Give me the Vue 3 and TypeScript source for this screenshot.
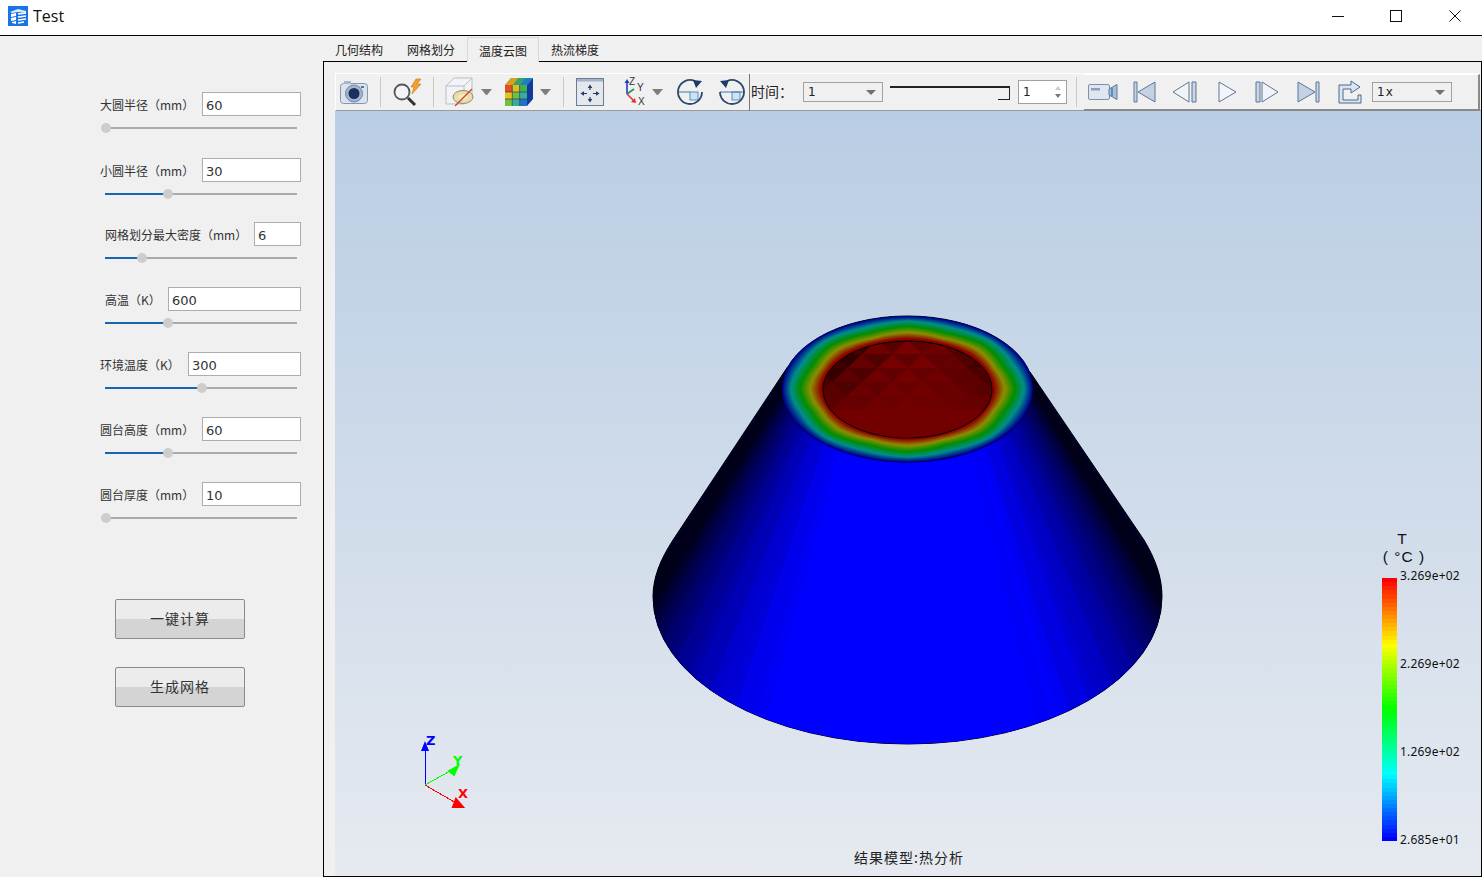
<script setup lang="ts">
import { computed } from "vue";

const params = [
  { label: "大圆半径（mm）", value: "60", inputWidth: 99, indent: false, pos: 1 },
  { label: "小圆半径（mm）", value: "30", inputWidth: 99, indent: false, pos: 63 },
  { label: "网格划分最大密度（mm）", value: "6", inputWidth: 47, indent: true, pos: 37 },
  { label: "高温（K）", value: "600", inputWidth: 133, indent: true, pos: 63 },
  { label: "环境温度（K）", value: "300", inputWidth: 113, indent: false, pos: 97 },
  { label: "圆台高度（mm）", value: "60", inputWidth: 99, indent: false, pos: 63 },
  { label: "圆台厚度（mm）", value: "10", inputWidth: 99, indent: false, pos: 1 },
];

const tabs = ["几何结构", "网格划分", "温度云图", "热流梯度"];

// rainbow map, t = 0 blue ... 1 red
function rainbow(t: number, scale = 255): string {
  const stops = [
    [0, 0, 1],
    [0, 1, 1],
    [0, 1, 0],
    [1, 1, 0],
    [1, 0, 0],
  ];
  const p = Math.min(0.9999, Math.max(0, t)) * 4;
  const i = Math.floor(p);
  const f = p - i;
  const c = stops[i].map((v, k) => Math.round((v + (stops[i + 1][k] - v) * f) * scale));
  return `rgb(${c[0]},${c[1]},${c[2]})`;
}

const legendBands = computed(() => {
  const n = 64;
  const out: string[] = [];
  for (let i = 0; i < n; i++) out.push(rainbow(1 - i / (n - 1)));
  return out;
});

const CX = 907.5;
const TOP_Y = 389;
const BASE_Y = 597;
const CONE_PATH =
  "M787.5 367 L673 540 C660 560 653 578 653 597 A254.5 147 0 0 0 1162 597 C1162 578 1156 560 1144 540 L1030 372 Z";

// side of the cone, one wedge per facet
const wedges = computed(() => {
  const n = 72;
  const out: { points: string; fill: string }[] = [];
  for (let i = 0; i < n; i++) {
    const a0 = -0.2 + ((Math.PI + 0.4) * i) / n;
    const a1 = -0.2 + ((Math.PI + 0.4) * (i + 1)) / n;
    const p = (r: number, ry: number, y: number, a: number) =>
      `${(CX + r * Math.cos(a)).toFixed(1)},${(y + ry * Math.sin(a)).toFixed(1)}`;
    const mid = (a0 + a1) / 2;
    const noise = 1 + 0.03 * Math.sin(i * 2.3);
    const b = Math.min(1, Math.max(0.1, Math.sin(mid) * 1.12 * noise + 0.06));
    out.push({
      points: [p(125, 73, TOP_Y, a0), p(125, 73, TOP_Y, a1), p(255, 147, BASE_Y, a1), p(255, 147, BASE_Y, a0)].join(" "),
      fill: `rgb(0,0,${Math.round(b * 255)})`,
    });
  }
  return out;
});

// top ring bands, slightly polygonal like the coarse mesh
const ringBands = computed(() => {
  const n = 44;
  const out: { points: string; fill: string }[] = [];
  for (let j = 0; j < n; j++) {
    const t = j / (n - 1);
    const pts: string[] = [];
    for (let k = 0; k < 96; k++) {
      const a = (k / 96) * Math.PI * 2;
      const saw = Math.abs(((a / (Math.PI / 4)) % 1) - 0.5) * 2;
      const bump = 0.034 * Math.sin(Math.PI * t) * (saw - 0.5);
      const r = 1 - 0.33 * t + bump;
      pts.push(`${(CX + 125.5 * r * Math.cos(a)).toFixed(1)},${(TOP_Y + 73 * r * Math.sin(a)).toFixed(1)}`);
    }
    out.push({ points: pts.join(" "), fill: rainbow(Math.min(1, t * 1.06), 142) });
  }
  return out;
});

// facets on the inside of the hole
const holeFacets = computed(() => {
  const out: { points: string; fill: string }[] = [];
  const dx = 30;
  const dy = 14;
  for (let row = 0; row < 5; row++) {
    const y = 340 + row * dy;
    for (let col = -4; col <= 4; col++) {
      const x = CX + col * dx + (row % 2 ? dx / 2 : 0);
      const edge = Math.min(1, Math.abs(x - CX) / 84);
      const up = Math.max(0, 1 - row / 4);
      const base = 112 - 60 * edge * edge * (0.3 + up);
      out.push({
        points: `${x},${y} ${x + dx / 2},${y + dy} ${x - dx / 2},${y + dy}`,
        fill: `rgb(${Math.round(base + 8 * (1 - row / 5))},0,0)`,
      });
      out.push({
        points: `${x},${y} ${x + dx},${y} ${x + dx / 2},${y + dy}`,
        fill: `rgb(${Math.round(base - 16 * (1 - row / 5))},0,0)`,
      });
    }
  }
  return out;
});
</script>

<template>
  <div class="app">
    <header class="titlebar">
      <svg class="app-icon" width="20" height="20" viewBox="0 0 20 20">
        <rect width="20" height="20" fill="#1a74e2" />
        <path d="M2 6 L10 3 L18 5 L18 7 L10 6 L4 7 Z" fill="#dbeafc" />
        <path d="M3 8 L8 7 L8 10 L3 11 Z M3 12 L8 11 L8 14 L3 15 Z M4 16 L8 15 L8 18 L4 17 Z" fill="#fff" />
        <path d="M10 8 L18 7 M10 11 L18 10 M10 14 L18 13 M10 17 L16 16" stroke="#fff" stroke-width="1.6" />
      </svg>
      <span class="app-title">Test</span>
      <div class="win-btns">
        <span class="win-btn"><svg width="14" height="14" viewBox="0 0 14 14"><path d="M1 7.5 H13" stroke="#111" /></svg></span>
        <span class="win-btn"><svg width="14" height="14" viewBox="0 0 14 14"><rect x="1.5" y="1.5" width="11" height="11" fill="none" stroke="#111" /></svg></span>
        <span class="win-btn"><svg width="14" height="14" viewBox="0 0 14 14"><path d="M1.5 1.5 L12.5 12.5 M12.5 1.5 L1.5 12.5" stroke="#111" /></svg></span>
      </div>
    </header>

    <div class="main">
      <aside class="side">
        <div v-for="p in params" :key="p.label" class="param">
          <div class="param-row" :class="{ indent: p.indent }">
            <label class="param-label">{{ p.label }}</label>
            <input class="param-input" :style="{ width: p.inputWidth + 'px' }" :value="p.value" readonly />
          </div>
          <div class="slider">
            <div class="slider-track"></div>
            <div class="slider-fill" :style="{ width: p.pos + 'px' }"></div>
            <div class="slider-handle" :style="{ left: p.pos + 'px' }"></div>
          </div>
        </div>
        <div class="actions">
          <button class="action-btn">一键计算</button>
          <button class="action-btn">生成网格</button>
        </div>
      </aside>

      <section class="content">
        <nav class="tabs">
          <span v-for="(t, i) in tabs" :key="t" class="tab" :class="{ active: i === 2 }">{{ t }}</span>
        </nav>

        <div class="frame">
          <div class="toolbar">
            <!-- camera -->
            <svg class="ml4" width="28" height="24" viewBox="0 0 28 24">
              <rect x="0.5" y="3.5" width="27" height="20" rx="3" fill="#dbe3ee" stroke="#8297b2" />
              <rect x="4" y="1" width="7" height="3" fill="#a9b8cb" />
              <rect x="21" y="6" width="3" height="2" fill="#5f7693" />
              <circle cx="14" cy="13.5" r="8.5" fill="#a3b5cb" stroke="#6f86a3" />
              <circle cx="14" cy="13.5" r="5.5" fill="#1c2f63" />
            </svg>
            <i class="sep ml12"></i>
            <!-- search with lightning -->
            <svg class="ml11" width="30" height="30" viewBox="0 0 30 30">
              <circle cx="10" cy="15" r="7.5" fill="#f2f4f7" stroke="#555" stroke-width="1.8" />
              <path d="M16 21 L23 28" stroke="#333" stroke-width="3" />
              <path d="M24 2 L29 2 L25 7 L29 7 L20 17 L22 10 L19 10 Z" fill="#f0a030" stroke="#c77a10" stroke-width="0.6" />
            </svg>
            <i class="sep ml11"></i>
            <!-- clipping box -->
            <svg class="ml11" width="30" height="30" viewBox="0 0 30 30">
              <path d="M1 9 L9 1 L27 1 L27 19 L19 27 L1 27 Z" fill="#f2f3f6" stroke="#b7bdc9" />
              <path d="M1 9 L19 9 L27 1 M19 9 L19 27" fill="none" stroke="#b7bdc9" />
              <ellipse cx="18" cy="20" rx="10" ry="6.5" fill="#ecdca5" stroke="#8a8a7a" />
              <ellipse cx="18" cy="20" rx="5" ry="3" fill="#f4e9c2" />
              <path d="M10 29 L27 12" stroke="#c8452c" stroke-width="1.2" />
            </svg>
            <i class="drop ml6"></i>
            <!-- colour cube -->
            <svg class="ml13" width="28" height="28" viewBox="0 0 28 28">
              <path d="M6 0 L28 0 L22 7 L0 7 Z" fill="#3aa06a" />
              <path d="M6 0 L13 0 L8 7 L0 7 Z" fill="#d8a020" />
              <path d="M20 0 L28 0 L22 7 L15 7 Z" fill="#1e7fc0" />
              <path d="M22 7 L28 0 L28 21 L22 28 Z" fill="#123a9c" />
              <rect x="0" y="7" width="7.3" height="7" fill="#e05020" />
              <rect x="7.3" y="7" width="7.3" height="7" fill="#d8c020" />
              <rect x="14.6" y="7" width="7.4" height="7" fill="#40b050" />
              <rect x="0" y="14" width="7.3" height="7" fill="#e8c020" />
              <rect x="7.3" y="14" width="7.3" height="7" fill="#70c040" />
              <rect x="14.6" y="14" width="7.4" height="7" fill="#30b0a0" />
              <rect x="0" y="21" width="7.3" height="7" fill="#70c040" />
              <rect x="7.3" y="21" width="7.3" height="7" fill="#30b0a0" />
              <rect x="14.6" y="21" width="7.4" height="7" fill="#2070d0" />
              <path d="M0 14 H22 M0 21 H22 M7.3 7 V28 M14.6 7 V28" stroke="#3a3a3a" stroke-width="0.7" />
            </svg>
            <i class="drop ml7"></i>
            <i class="sep ml12"></i>
            <!-- fit view -->
            <svg class="ml12" width="28" height="28" viewBox="0 0 28 28">
              <rect x="0.5" y="0.5" width="27" height="27" fill="#e4e7ec" stroke="#6b7d95" />
              <rect x="1" y="1" width="26" height="2.5" fill="#9fb3cc" />
              <path d="M14 9 V12 M14 19 V22 M7 15.5 H11 M17 15.5 H21" stroke="#1f3a63" stroke-width="1.2" />
              <path d="M14 6.5 L11.7 10 H16.3 Z M14 24.5 L11.7 21 H16.3 Z M4.5 15.5 L8 13.2 V17.8 Z M23.5 15.5 L20 13.2 V17.8 Z" fill="#1f3a63" />
            </svg>
            <!-- axes -->
            <svg class="ml16" width="26" height="30" viewBox="0 0 26 30">
              <path d="M7 17 V5" stroke="#1c3fc0" stroke-width="1.6" />
              <path d="M7 2 L4.5 6 H9.5 Z" fill="#1c3fc0" />
              <path d="M7 17 L14 12" stroke="#1a9a50" stroke-width="1.6" />
              <path d="M7 17 L15 25" stroke="#e0303a" stroke-width="1.6" />
              <path d="M16 26 L11 25 L15 21 Z" fill="#e0303a" />
              <text x="9" y="8" class="axis-label">Z</text>
              <text x="17" y="14" class="axis-label">Y</text>
              <text x="18" y="28" class="axis-label">X</text>
            </svg>
            <i class="drop ml6"></i>
            <!-- rotate cw -->
            <svg class="ml13" width="28" height="28" viewBox="0 0 28 28">
              <rect x="14" y="14" width="8" height="8" fill="#cfe3f6" stroke="#3c78b0" stroke-width="0.8" />
              <path d="M2 14 H14" stroke="#3c78b0" />
              <path d="M19 3.1 A12 12 0 1 0 26 14" fill="none" stroke="#2c4a6e" stroke-width="1.8" />
              <path d="M17 2 L26 3 L20 10 Z" fill="#1f3a63" />
            </svg>
            <!-- rotate ccw -->
            <svg class="ml14" width="28" height="28" viewBox="0 0 28 28">
              <rect x="14" y="14" width="8" height="8" fill="#cfe3f6" stroke="#3c78b0" stroke-width="0.8" />
              <path d="M2 14 H26" stroke="#3c78b0" />
              <path d="M9 3.1 A12 12 0 1 1 2 14" fill="none" stroke="#2c4a6e" stroke-width="1.8" />
              <path d="M11 2 L2 3 L8 10 Z" fill="#1f3a63" />
            </svg>
            <i class="sep dark ml3"></i>
            <span class="time-label ml1">时间：</span>
            <div class="combo"><span>1</span><i class="combo-arrow"></i></div>
            <div class="time-slider ml7"><i class="time-handle"></i></div>
            <div class="spin ml8">
              <span>1</span>
              <span class="spin-arrows"><i class="spin-up"></i><i class="spin-down"></i></span>
            </div>
            <i class="sep ml9"></i>

            <div class="player ml7">
              <svg class="ml4" width="30" height="18" viewBox="0 0 30 18">
                <rect x="0.5" y="1.5" width="21" height="15" rx="1.5" fill="#dfe6f0" stroke="#7b90ab" />
                <rect x="3" y="5" width="9" height="2.5" fill="#8ca0ba" />
                <path d="M21 6 L29 1.5 V16.5 L21 12 Z" fill="#a9bdd4" stroke="#5f7a98" />
                <path d="M24 5 V13" stroke="#2e86c8" stroke-width="1.5" />
              </svg>
              <svg class="ml15" width="23" height="22" viewBox="0 0 23 22">
                <path d="M1 1 H4 V21 H1 Z" fill="#c9d5e6" stroke="#5d7695" />
                <path d="M22 1 V21 L5 11 Z" fill="#c4d1e3" stroke="#5d7695" />
              </svg>
              <svg class="ml16" width="25" height="22" viewBox="0 0 25 22">
                <path d="M17 1 V21 L1 11 Z" fill="#f0f3f8" stroke="#5d7695" />
                <path d="M20 1 H24 V21 H20 Z" fill="#c9d5e6" stroke="#5d7695" />
              </svg>
              <svg class="ml21" width="19" height="22" viewBox="0 0 19 22">
                <path d="M1 1 V21 L18 11 Z" fill="#f2f5f9" stroke="#5d7695" />
              </svg>
              <svg class="ml18" width="24" height="22" viewBox="0 0 24 22">
                <path d="M1 1 H5 V21 H1 Z" fill="#c9d5e6" stroke="#5d7695" />
                <path d="M7 1 V21 L23 11 Z" fill="#f0f3f8" stroke="#5d7695" />
              </svg>
              <svg class="ml18" width="23" height="22" viewBox="0 0 23 22">
                <path d="M1 1 V21 L18 11 Z" fill="#c4d1e3" stroke="#5d7695" />
                <path d="M19 1 H22 V21 H19 Z" fill="#c9d5e6" stroke="#5d7695" />
              </svg>
              <svg class="ml17" width="25" height="24" viewBox="0 0 25 24">
                <path d="M2 23 H24 V15 H21 V20 H6 V9 H14 V13 L23 7 L14 1 V5 H2 Z" fill="#dbe5f1" stroke="#4a6a8a" />
              </svg>
              <div class="combo ml10"><span>1x</span><i class="combo-arrow"></i></div>
            </div>
          </div>

          <div class="viewport">
            <svg class="scene" viewBox="335 111 1147 765" width="1147" height="765">
              <defs>
                <clipPath id="cone-clip">
                  <path :d="CONE_PATH" />
                </clipPath>
                <clipPath id="hole-clip">
                  <ellipse cx="907.5" cy="389.5" rx="84.5" ry="48.5" />
                </clipPath>
              </defs>

              <path :d="CONE_PATH" fill="#000028" stroke="#000" />
              <g clip-path="url(#cone-clip)">
                <polygon v-for="(w, i) in wedges" :key="i" :points="w.points" :fill="w.fill" :stroke="w.fill" stroke-width="0.6" />
              </g>

              <ellipse cx="907.5" cy="389" rx="125.5" ry="73" fill="#00007a" stroke="#000" />
              <polygon v-for="(b, i) in ringBands" :key="'r' + i" :points="b.points" :fill="b.fill" />

              <ellipse cx="907.5" cy="389.5" rx="84.5" ry="48.5" fill="#720000" />
              <g clip-path="url(#hole-clip)">
                <polygon v-for="(f, i) in holeFacets" :key="'f' + i" :points="f.points" :fill="f.fill" />
                <path d="M868 434 Q908 443 948 434" fill="none" stroke="#f00000" stroke-width="1.8" />
              </g>
              <ellipse cx="907.5" cy="389.5" rx="84.5" ry="48.5" fill="none" stroke="#000" />

              <!-- axes -->
              <g shape-rendering="crispEdges">
                <path d="M425 785 V748" stroke="#0000ff" />
                <path d="M425 785 L452 770" stroke="#00ff00" />
                <path d="M425 785 L456 803" stroke="#ff0000" />
              </g>
              <path d="M425 741 L421 751 H429 Z" fill="#0000ff" />
              <path d="M449 771 L458 766 L454 775 Z" fill="#00ff00" stroke="#00ff00" stroke-width="2" />
              <path d="M463 807 L453 807 L456 799 Z" fill="#ff0000" stroke="#ff0000" stroke-width="2" />
              <text x="426" y="745" class="ax-z">Z</text>
              <text x="453" y="765" class="ax-y">Y</text>
              <text x="458" y="798" class="ax-x">X</text>
            </svg>

            <div class="legend">
              <div class="legend-title">T</div>
              <div class="legend-unit">( °C )</div>
              <div class="legend-body">
                <div class="legend-bar">
                  <i v-for="(c, i) in legendBands" :key="i" :style="{ background: c }"></i>
                </div>
                <div class="legend-ticks">
                  <span>3.269e+02</span>
                  <span>2.269e+02</span>
                  <span>1.269e+02</span>
                  <span>2.685e+01</span>
                </div>
              </div>
            </div>

            <div class="caption">结果模型:热分析</div>
          </div>
        </div>
      </section>
    </div>
  </div>
</template>

<style scoped>
.app {
  width: 1482px;
  height: 877px;
  display: flex;
  flex-direction: column;
  background: #f0f0f0;
  font-family: "Noto Sans CJK SC", "Noto Sans", sans-serif;
  color: #333;
  overflow: hidden;
}

.titlebar {
  height: 36px;
  flex: none;
  box-sizing: border-box;
  background: #fff;
  border-bottom: 1px solid #000;
  display: flex;
  align-items: center;
  padding: 0 0 3px 8px;
  overflow: hidden;
}
.app-title { margin-left: 5px; font: 16px "Open Sans", sans-serif; color: #111; }
.win-btns { margin-left: auto; margin-right: -2px; display: flex; }
.win-btn { width: 58.5px; height: 32px; display: flex; align-items: center; justify-content: center; }

.main { flex: 1; display: flex; min-height: 0; }

.side { width: 323px; flex: none; padding-top: 56px; box-sizing: border-box; }
.param { height: 65px; }
.param:first-child { height: 66px; }
.param:nth-child(2) { height: 64px; }
.param-row {
  width: 301px;
  height: 24px;
  padding-left: 100px;
  box-sizing: border-box;
  display: flex;
  justify-content: space-between;
  align-items: center;
}
.param-row.indent { padding-left: 105px; }
.param-label { font-size: 12px; color: #333; white-space: nowrap; }
.param-input {
  height: 24px;
  box-sizing: border-box;
  border: 1px solid #adadad;
  background: #fff;
  padding: 2px 3px 0;
  font: 13px "DejaVu Sans", sans-serif;
  color: #333;
  outline: none;
}

.slider { position: relative; margin: 7px 0 0 105px; width: 192px; height: 10px; }
.slider-track { position: absolute; left: 0; right: 0; top: 4px; height: 2px; background: #aaa; }
.slider-fill { position: absolute; left: 0; top: 4px; height: 2px; background: #1565b0; }
.slider-handle {
  position: absolute;
  top: 0;
  width: 10px;
  height: 10px;
  margin-left: -5px;
  border-radius: 50%;
  background: #cdcdcd;
}

.actions { padding: 52px 0 0 115px; display: flex; flex-direction: column; gap: 28px; }
.action-btn {
  width: 130px;
  height: 40px;
  border: 1px solid #8a8a8a;
  border-radius: 2px;
  background: linear-gradient(#ececec 0, #ececec 50%, #d4d4d4 50%, #d4d4d4 100%);
  font: 14px "Noto Sans CJK SC", sans-serif;
  letter-spacing: 1px;
  color: #333;
  padding: 0 0 2px;
}

.content { flex: 1; display: flex; flex-direction: column; min-width: 0; }
.tabs {
  height: 25px;
  flex: none;
  border-bottom: 1px solid #000;
  display: flex;
}
.tab {
  width: 72px;
  height: 25px;
  box-sizing: border-box;
  padding-top: 5px;
  text-align: center;
  font-size: 12px;
  color: #222;
  line-height: 17px;
}
.tab.active {
  height: 25px;
  margin-top: 1px;
  margin-bottom: -1px;
  background: #f0f0f0;
  border: 1px solid #d8d8d8;
  border-bottom: none;
  padding-top: 4px;
}

.frame {
  flex: 1;
  min-height: 0;
  display: flex;
  flex-direction: column;
  border-left: 1px solid #000;
  border-right: 1px solid #000;
  border-bottom: 1px solid #000;
  padding: 11px 0 0 11px;
}

.toolbar {
  height: 38px;
  flex: none;
  box-sizing: border-box;
  display: flex;
  align-items: center;
  border-top: 1px solid #fff;
  border-left: 1px solid #fff;
  border-bottom: 1px solid #9a9a9a;
}
.toolbar svg { flex: none; display: block; }
.axis-label { font: 10px "Liberation Sans", sans-serif; fill: #333; }

.sep { display: block; width: 1px; height: 30px; background: #c8c8c8; flex: none; }
.sep.dark { height: 37px; background: #777; }
.drop { display: block; flex: none; width: 1px; height: 0; border: 5px solid transparent; border-top: 6px solid #7d7d7d; border-bottom: none; }

.time-label { width: 52px; flex: none; font-size: 14px; color: #222; margin-bottom: 2px; }
.combo {
  width: 80px;
  height: 20px;
  flex: none;
  box-sizing: border-box;
  border: 1px solid #a0a0a0;
  display: flex;
  align-items: center;
  justify-content: space-between;
  padding: 0 6px 0 4px;
  font: 12px "DejaVu Sans", sans-serif;
  letter-spacing: 1px;
  color: #222;
}
.combo-arrow { width: 0; height: 0; border: 5px solid transparent; border-top: 5px solid #707070; border-bottom: none; }

.time-slider {
  position: relative;
  width: 120px;
  height: 14px;
  flex: none;
  border-top: 2px solid #222;
  box-sizing: border-box;
  align-self: flex-start;
  margin-top: 12px;
}
.time-handle {
  position: absolute;
  right: 0;
  top: 0;
  width: 12px;
  height: 12px;
  box-sizing: border-box;
  background: #f0f0f0;
  border-right: 1px solid #222;
  border-bottom: 1px solid #222;
}
.spin {
  width: 49px;
  height: 24px;
  flex: none;
  box-sizing: border-box;
  border: 1px solid #a0a0a0;
  background: #fff;
  display: flex;
  align-items: center;
  justify-content: space-between;
  padding: 0 5px 0 4px;
  font: 12px "DejaVu Sans", sans-serif;
  color: #222;
}
.spin-arrows { display: flex; flex-direction: column; gap: 4px; }
.spin-up { width: 0; height: 0; border: 3px solid transparent; border-bottom: 4px solid #ccc; border-top: none; }
.spin-down { width: 0; height: 0; border: 3px solid transparent; border-top: 4px solid #777; border-bottom: none; }

.player {
  flex: 1;
  height: 37px;
  margin-right: 1px;
  margin-bottom: -1px;
  align-self: flex-start;
  display: flex;
  align-items: center;
  border-top: 1px solid #fff;
  border-right: 2px solid #8a8a8a;
  border-bottom: 2px solid #8a8a8a;
  box-sizing: border-box;
}

.ml1 { margin-left: 1px; }
.ml3 { margin-left: 3px; }
.ml4 { margin-left: 4px; }
.ml6 { margin-left: 6px; }
.ml7 { margin-left: 7px; }
.ml8 { margin-left: 8px; }
.ml9 { margin-left: 9px; }
.ml10 { margin-left: 10px; }
.ml11 { margin-left: 11px; }
.ml12 { margin-left: 12px; }
.ml13 { margin-left: 13px; }
.ml14 { margin-left: 14px; }
.ml15 { margin-left: 15px; }
.ml16 { margin-left: 16px; }
.ml17 { margin-left: 17px; }
.ml18 { margin-left: 18px; }
.ml21 { margin-left: 21px; }

.viewport {
  position: relative;
  flex: 1;
  min-height: 0;
  overflow: hidden;
  background: linear-gradient(#b9cde4, #e6eaf0);
}
.scene { position: absolute; left: 0; top: 0; display: block; }
.ax-z, .ax-y, .ax-x { font: bold 13px "DejaVu Sans", sans-serif; }
.ax-z { fill: #0000ff; }
.ax-y { fill: #00ff00; }
.ax-x { fill: #ff0000; }

.legend {
  position: absolute;
  left: 1047px;
  top: 419px;
  width: 95px;
  color: #111;
}
.legend-title { width: 40px; text-align: center; font: 15.5px/18px "Liberation Sans", sans-serif; }
.legend-unit { width: 44px; text-align: center; font: 15.5px/18px "Liberation Sans", sans-serif; letter-spacing: 1px; }
.legend-body { display: flex; margin-top: 12px; }
.legend-bar { width: 15px; height: 263px; display: flex; flex-direction: column; }
.legend-bar i { display: block; flex: 1; }
.legend-ticks {
  height: 280px;
  margin: -10px 0 0 3px;
  display: flex;
  flex-direction: column;
  justify-content: space-between;
  font-family: "Noto Sans", sans-serif;
  font-size: 12px;
  line-height: 16px;
  letter-spacing: 0.2px;
}

.caption {
  position: absolute;
  left: 519px;
  top: 736px;
  font-size: 14px;
  letter-spacing: 1px;
  color: #222;
  white-space: nowrap;
}
</style>

<style>
html, body { margin: 0; padding: 0; overflow: hidden; }
</style>
